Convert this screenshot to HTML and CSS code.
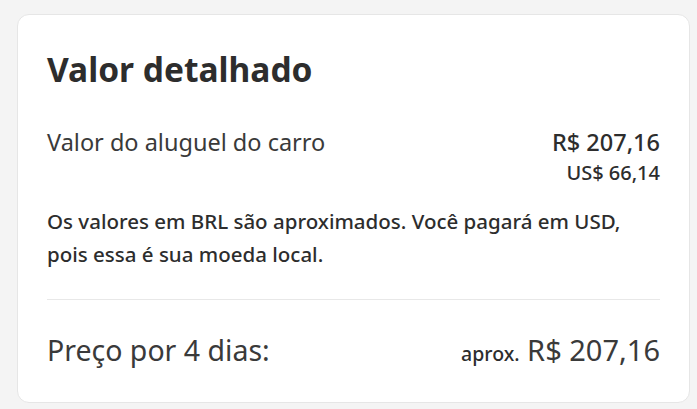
FILE: index.html
```html
<!DOCTYPE html>
<html>
<head>
  <title>Valor detalhado</title>
  <link rel="stylesheet" href="styles.css">
</head>
<body>
  <div class="card">
    <h2 class="title">Valor detalhado</h2>

    <div class="row">
      <span class="label">Valor do aluguel do carro</span>
      <div class="amounts">
        <span class="brl">R$ 207,16</span>
        <span class="usd">US$ 66,14</span>
      </div>
    </div>

    <p class="note">Os valores em BRL são aproximados. Você pagará em USD, pois essa é sua moeda local.</p>

    <hr class="divider">

    <div class="total">
      <span class="total-label">Preço por 4 dias:</span>
      <span class="total-value"><span class="approx">aprox.</span> R$ 207,16</span>
    </div>
  </div>
</body>
</html>
```

FILE: styles.css
```css
body {
  background-color: #f4f4f4;
  margin: 0;
  padding: 14px 7px 6px 17px;
  font-family: "Noto Sans", "Open Sans", sans-serif;
  color: #2d2d2d;
}

.card {
  background-color: #ffffff;
  border: 1px solid #e6e6e6;
  border-radius: 12px;
  padding: 34px 29px 20px 29px;
  height: 389px;
  box-sizing: border-box;
}

.title {
  font-size: 33.5px;
  font-weight: 700;
  margin: 0 0 37px 0;
  line-height: 40px;
}

.row {
  display: flex;
  justify-content: space-between;
  align-items: flex-start;
}

.label {
  font-size: 23.5px;
  line-height: 32px;
  color: #3a3a3a;
}

.amounts {
  display: flex;
  flex-direction: column;
  align-items: flex-end;
}

.brl {
  font-size: 23.5px;
  font-weight: 500;
  line-height: 32px;
}

.usd {
  font-size: 20px;
  font-weight: 500;
  line-height: 30px;
}

.note {
  font-size: 20.5px;
  font-weight: 500;
  line-height: 33px;
  margin: 17px 0 0 0;
  max-width: 605px;
}

.divider {
  border: 0;
  border-top: 1px solid #e8e8e8;
  margin: 28px 0 30px 0;
}

.total {
  display: flex;
  justify-content: space-between;
  align-items: baseline;
  line-height: 40px;
}

.total-label {
  font-size: 28.5px;
  color: #3a3a3a;
}

.total-value {
  font-size: 29px;
  color: #3a3a3a;
}

.approx {
  font-size: 19.5px;
  font-weight: 500;
  color: #2d2d2d;
}
```
